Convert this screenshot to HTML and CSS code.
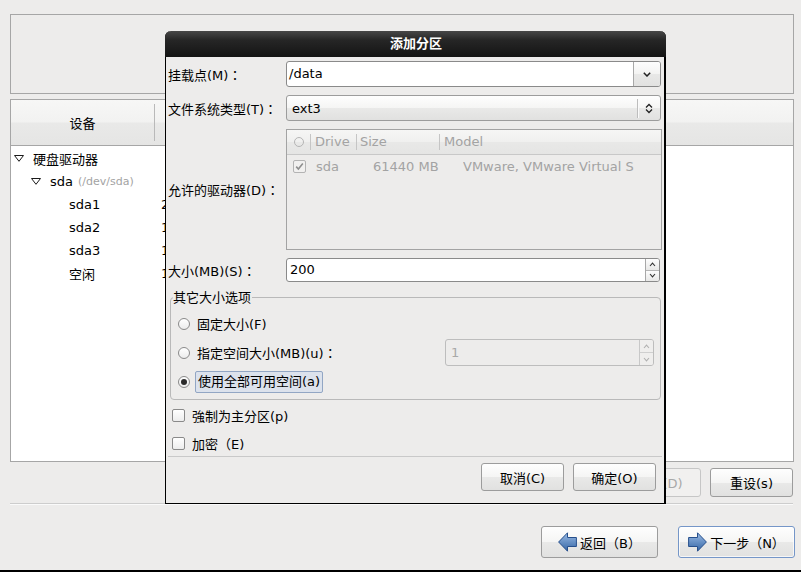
FILE: index.html
```html
<!DOCTYPE html>
<html lang="zh-CN">
<head>
<meta charset="utf-8">
<title>添加分区</title>
<link rel="stylesheet" href="styles.css">
</head>
<body>
<div class="screen">
  <div class="top-box"></div>
  <div class="table-box">
    <div class="thead">
      <div class="th th-dev"><span>设备</span></div>
      <div class="th th-rest"></div>
    </div>
    <div class="tree">
      <div class="tr lvl0">
        <div class="tc-name"><svg class="exp" width="10" height="7" viewBox="0 0 10 7"><path d="M0.5 0.5H9.5L5 6.3Z" fill="#fff" stroke="#1a1a1a" stroke-width="1"/></svg><span>硬盘驱动器</span></div>
        <div class="tc-size"></div>
      </div>
      <div class="tr lvl1">
        <div class="tc-name"><svg class="exp" width="10" height="7" viewBox="0 0 10 7"><path d="M0.5 0.5H9.5L5 6.3Z" fill="#fff" stroke="#1a1a1a" stroke-width="1"/></svg><span>sda</span><span class="dev">(/dev/sda)</span></div>
        <div class="tc-size"></div>
      </div>
      <div class="tr lvl2"><div class="tc-name">sda1</div><div class="tc-size">200</div></div>
      <div class="tr lvl2"><div class="tc-name">sda2</div><div class="tc-size">1024</div></div>
      <div class="tr lvl2"><div class="tc-name">sda3</div><div class="tc-size">10240</div></div>
      <div class="tr lvl2"><div class="tc-name">空闲</div><div class="tc-size">1</div></div>
    </div>
  </div>
  <div class="actions">
    <button class="btn act">创建(C)</button>
    <button class="btn act">编辑(E)</button>
    <button class="btn act" disabled>删除(D)</button>
    <button class="btn act">重设(s)</button>
  </div>
  <div class="hsep"></div>
  <div class="nav">
    <button class="btn nav-btn">
      <svg width="19" height="20" viewBox="0 0 19 20"><defs><linearGradient id="ga" x1="0" y1="0" x2="0" y2="1"><stop offset="0" stop-color="#9bbce6"/><stop offset="1" stop-color="#3465a4"/></linearGradient></defs><path d="M0.6 10L9.5 0.8V5.5H18.4V14.5H9.5V19.2Z" fill="url(#ga)" stroke="#264f8c" stroke-width="1"/></svg>
      <span>返回（B）</span>
    </button>
    <button class="btn nav-btn focused">
      <svg width="19" height="20" viewBox="0 0 19 20"><defs><linearGradient id="gb" x1="0" y1="0" x2="0" y2="1"><stop offset="0" stop-color="#9bbce6"/><stop offset="1" stop-color="#3465a4"/></linearGradient></defs><path d="M18.4 10L9.5 0.8V5.5H0.6V14.5H9.5V19.2Z" fill="url(#gb)" stroke="#264f8c" stroke-width="1"/></svg>
      <span>下一步（N）</span>
    </button>
  </div>
  <div class="bottom-bar"></div>
</div>

<div class="dialog">
  <div class="titlebar">添加分区</div>
  <div class="dlg-body">
    <div class="form">
      <div class="lbl">挂载点(M)<span class="colon" lang="zh-TW">：</span></div>
      <div class="combo-entry">
        <span class="val">/data</span>
        <span class="cbtn"><svg width="8" height="5" viewBox="0 0 8 5"><path d="M0.8 0.8L4 4L7.2 0.8" fill="none" stroke="#222" stroke-width="1.5"/></svg></span>
      </div>

      <div class="lbl">文件系统类型(T)<span class="colon" lang="zh-TW">：</span></div>
      <div class="combo">
        <span class="val">ext3</span>
        <span class="csep"></span>
        <span class="carr"><svg width="8" height="11" viewBox="0 0 8 11"><path d="M1 4.5L4 1.5L7 4.5M1 6.5L4 9.5L7 6.5" fill="none" stroke="#222" stroke-width="1.3"/></svg></span>
      </div>

      <div class="lbl">允许的驱动器(D)<span class="colon" lang="zh-TW">：</span></div>
      <div class="drives">
        <div class="dhead">
          <span class="dh dh-sel"><span class="hcircle"></span></span>
          <span class="dh dh-drive">Drive</span>
          <span class="dh dh-size">Size</span>
          <span class="dh dh-model">Model</span>
        </div>
        <div class="drow">
          <span class="dc dc-sel"><span class="chk dis"><svg width="11" height="11" viewBox="0 0 11 11"><path d="M2.2 5.6L4.4 8L8.8 2.6" fill="none" stroke="#8e8e8e" stroke-width="1.6"/></svg></span></span>
          <span class="dc dc-drive">sda</span>
          <span class="dc dc-size">61440 MB</span>
          <span class="dc dc-model">VMware, VMware Virtual S</span>
        </div>
      </div>

      <div class="lbl">大小(MB)(S)<span class="colon" lang="zh-TW">：</span></div>
      <div class="spin spin-size">
        <span class="val">200</span>
        <span class="spin-btns">
          <span class="sb"><svg width="7" height="5" viewBox="0 0 7 5"><path d="M1 4L3.5 1.2L6 4" fill="none" stroke="#333" stroke-width="1.1"/></svg></span>
          <span class="sb"><svg width="7" height="5" viewBox="0 0 7 5"><path d="M1 1L3.5 3.8L6 1" fill="none" stroke="#333" stroke-width="1.1"/></svg></span>
        </span>
      </div>
    </div>

    <fieldset class="frame">
      <legend>其它大小选项</legend>
      <div class="opt"><span class="radio"></span><span class="otext">固定大小(F)</span></div>
      <div class="opt">
        <span class="radio"></span><span class="otext">指定空间大小(MB)(u)<span class="colon" lang="zh-TW">：</span></span>
        <div class="spin spin-dis">
          <span class="val">1</span>
          <span class="spin-btns">
            <span class="sb"><svg width="7" height="5" viewBox="0 0 7 5"><path d="M1 4L3.5 1.2L6 4" fill="none" stroke="#b0b0b0" stroke-width="1.1"/></svg></span>
            <span class="sb"><svg width="7" height="5" viewBox="0 0 7 5"><path d="M1 1L3.5 3.8L6 1" fill="none" stroke="#b0b0b0" stroke-width="1.1"/></svg></span>
          </span>
        </div>
      </div>
      <div class="opt"><span class="radio on"></span><span class="otext focus">使用全部可用空间(a)</span></div>
    </fieldset>

    <div class="check-row first"><span class="chk"></span><span>強制为主分区(p)</span></div>
    <div class="check-row"><span class="chk"></span><span>加密（E)</span></div>
    <div class="dsep"></div>
    <div class="dlg-buttons">
      <button class="btn dbtn">取消(C)</button>
      <button class="btn dbtn">确定(O)</button>
    </div>
  </div>
</div>
</body>
</html>
```

FILE: styles.css
```css
* { box-sizing: border-box; }
html, body { margin: 0; padding: 0; }
body {
  width: 801px;
  height: 572px;
  overflow: hidden;
  position: relative;
  background: #edeceb;
  font-family: "DejaVu Sans", "Noto Sans CJK SC", sans-serif;
  font-size: 13px;
  color: #000;
}
.colon { font-family: "Noto Sans CJK TC", "Noto Sans CJK SC", sans-serif; }

/* ---------- background window ---------- */
.screen { display: flex; flex-direction: column; height: 572px; }
.top-box {
  margin: 14px 7px 0 10px;
  height: 80px;
  border: 1px solid #a6a6a6;
}
.table-box {
  margin: 5px 7px 0 10px;
  height: 363px;
  border: 1px solid #a6a6a6;
  background: #fff;
  display: flex;
  flex-direction: column;
}
.thead {
  height: 46px;
  flex: none;
  display: flex;
  align-items: center;
  background: linear-gradient(#f7f7f6 0%, #f2f2f1 48%, #e9e9e8 52%, #e5e5e4 100%);
  border-bottom: 1px solid #a6a6a6;
}
.th-dev {
  width: 144px;
  height: 37px;
  display: flex;
  align-items: center;
  justify-content: center;
  border-right: 1px solid #b9b9b9;
}
.tree { padding-top: 1px; }
.tr { height: 23px; display: flex; align-items: center; }
.tc-name { width: 150px; display: flex; align-items: center; }
.tc-size { flex: 1; }
.lvl0 .tc-name { padding-left: 3px; }
.lvl1 .tc-name { padding-left: 20px; }
.lvl2 .tc-name { padding-left: 58px; }
.exp { margin-right: 9px; flex: none; }
.dev { color: #a3a3a3; font-size: 11px; margin-left: 5px; }

.btn {
  font-family: inherit;
  font-size: 13px;
  color: #000;
  border: 1px solid #9c9c9c;
  border-radius: 3px;
  background: linear-gradient(#fefefe 0%, #f5f5f4 50%, #e9e9e8 51%, #e1e1e0 100%);
  padding: 0;
  margin: 0;
}
.btn:disabled { color: #a8a8a8; border-color: #c6c6c6; background: #f1f0ef; }

.actions {
  margin-top: 6px;
  height: 29px;
  display: flex;
  justify-content: flex-end;
  gap: 9px;
  padding-right: 8px;
}
.act { width: 83px; height: 29px; }

.hsep {
  margin: 6px 8px 0 10px;
  height: 2px;
  border-top: 1px solid #cdcdcd;
  border-bottom: 1px solid #fafafa;
}
.nav {
  margin-top: 21px;
  display: flex;
  justify-content: flex-end;
  gap: 20px;
  padding-right: 6px;
}
.nav-btn {
  width: 117px;
  height: 32px;
  display: flex;
  align-items: center;
  justify-content: center;
  gap: 3px;
}
.nav-btn svg { flex: none; }
.nav-btn.focused { border-color: #7596c8; box-shadow: inset 0 0 0 1px rgba(255,255,255,0.7); }
.bottom-bar { margin-top: auto; height: 2px; background: #000; }

/* ---------- dialog ---------- */
.dialog {
  position: absolute;
  left: 165px;
  top: 31px;
  width: 501px;
  background: #edeceb;
  border: 1px solid #000;
  border-top: none;
  border-right-width: 2px;
  border-radius: 6px 6px 0 0;
}
.titlebar {
  height: 26px;
  line-height: 26px;
  margin: 0 -2px 0 -1px;
  border-radius: 6px 6px 0 0;
  background: linear-gradient(#474747 0%, #262626 35%, #141414 100%);
  color: #fff;
  font-weight: bold;
  text-align: center;
  padding-left: 1px;
}
.dlg-body {
  padding: 4px 3px 12px 2px;
  display: flex;
  flex-direction: column;
}
.form {
  display: grid;
  grid-template-columns: 118px 1fr;
  grid-template-rows: 26px 26px 121px 24px;
  row-gap: 8px;
}
.lbl { align-self: center; white-space: nowrap; }

.val { flex: 1; white-space: nowrap; overflow: hidden; }

.combo-entry {
  display: flex;
  border: 1px solid #8a8a8a;
  border-radius: 3px;
  background: #fff;
  overflow: hidden;
}
.combo-entry .val { padding-left: 2px; line-height: 24px; }
.cbtn {
  width: 27px;
  display: flex;
  align-items: center;
  justify-content: center;
  border-left: 1px solid #a8a8a8;
  background: linear-gradient(#fdfdfd 0%, #f3f3f2 50%, #e8e8e7 51%, #e2e2e1 100%);
}

.combo {
  display: flex;
  align-items: center;
  border: 1px solid #9c9c9c;
  border-radius: 3px;
  background: linear-gradient(#fefefe 0%, #f5f5f4 50%, #e9e9e8 51%, #e1e1e0 100%);
}
.combo .val { padding-left: 5px; }
.csep { width: 1px; height: 19px; background: #bdbdbd; box-shadow: 1px 0 0 #fafafa; }
.carr { width: 22px; display: flex; justify-content: center; }

.drives {
  margin-right: -1px;
  border: 1px solid #a3a3a3;
  background: #edeceb;
  color: #a3a3a3;
}
.dhead {
  height: 25px;
  display: flex;
  align-items: center;
  border-bottom: 1px solid #c8c8c8;
  background: linear-gradient(#f6f6f5 0%, #f0f0ef 50%, #e8e8e7 51%, #e5e5e4 100%);
}
.dh { height: 16px; line-height: 16px; display: flex; align-items: center; }
.dh-sel { width: 23px; justify-content: center; padding-left: 1px; }
.dh-drive { width: 46px; border-left: 1px solid #c5c5c5; padding-left: 4px; }
.dh-size { width: 83px; border-left: 1px solid #c5c5c5; padding-left: 3px; }
.dh-model { flex: 1; border-left: 1px solid #c5c5c5; padding-left: 4px; }
.hcircle { width: 10px; height: 10px; border: 1px solid #b5b5b5; border-radius: 50%; }
.drow { height: 22px; display: flex; align-items: center; white-space: nowrap; }
.dc-sel { width: 29px; padding-left: 6px; display: flex; }
.dc-drive { width: 57px; }
.dc-size { width: 90px; }
.dc-model { flex: 1; overflow: hidden; }

.spin {
  display: flex;
  border: 1px solid #8a8a8a;
  border-radius: 3px;
  background: #fff;
  overflow: hidden;
}
.spin-size { margin-right: 1px; }
.spin-size .val { padding-left: 3px; line-height: 22px; }
.spin-btns { width: 14px; display: flex; flex-direction: column; border-left: 1px solid #a8a8a8; }
.sb {
  flex: 1;
  display: flex;
  align-items: center;
  justify-content: center;
  background: linear-gradient(#fdfdfd, #e8e8e7);
}
.sb + .sb { border-top: 1px solid #b5b5b5; }

.frame {
  margin: 8px 0 0 2px;
  padding: 4px 6px 3px 7px;
  border: 1px solid #b9b9b9;
  border-radius: 4px;
  min-width: 0;
}
.frame legend { padding: 0 1px 0 0; margin-left: -5px; line-height: 15px; }
.opt { height: 29px; display: flex; align-items: center; }
.radio {
  width: 12px;
  height: 12px;
  flex: none;
  border: 1px solid #8a8a8a;
  border-radius: 50%;
  background: linear-gradient(#ffffff, #ececec);
  margin-right: 7px;
  display: flex;
  align-items: center;
  justify-content: center;
}
.radio.on::after {
  content: "";
  width: 6px;
  height: 6px;
  border-radius: 50%;
  background: #2b2b2b;
}
.otext { white-space: nowrap; }
.otext.focus {
  margin-left: -2px;
  padding: 0 2px;
  height: 22px;
  line-height: 20px;
  background: #dce2ec;
  border: 1px solid #92a6c4;
  border-radius: 2px;
}
.spin-dis {
  margin-left: auto;
  width: 209px;
  height: 27px;
  border-color: #bdbdbd;
  background: #edeceb;
  color: #a8a8a8;
}
.spin-dis .val { padding-left: 5px; line-height: 25px; }
.spin-dis .spin-btns { border-left-color: #c8c8c8; }
.spin-dis .sb { background: #efeeed; }
.spin-dis .sb + .sb { border-top-color: #cfcfcf; }

.chk {
  width: 13px;
  height: 13px;
  flex: none;
  border: 1px solid #8a8a8a;
  border-radius: 2px;
  background: linear-gradient(#ffffff, #ededed);
  display: flex;
  align-items: center;
  justify-content: center;
}
.chk.dis { border-color: #b3b3b3; background: #f1f0ef; }
.check-row { height: 26px; display: flex; align-items: center; padding-left: 4px; gap: 7px; margin-top: 2px; }
.check-row.first { margin-top: 2px; }
.dsep { height: 1px; background: #c9c9c9; margin-right: -1px; }
.dlg-buttons {
  margin-top: 6px;
  display: flex;
  justify-content: flex-end;
  gap: 9px;
  padding-right: 5px;
}
.dbtn { width: 83px; height: 28px; }
```
